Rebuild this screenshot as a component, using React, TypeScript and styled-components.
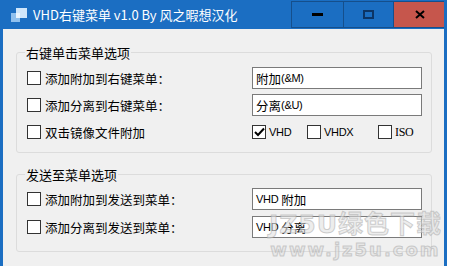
import React from 'react';
import styled, { createGlobalStyle } from 'styled-components';

const GlobalStyle = createGlobalStyle`
  * { box-sizing: border-box; }
  body {
    margin: 0;
    background: #ffffff;
    font-family: "Noto Sans CJK SC", "Liberation Sans", sans-serif;
  }
`;

const Window = styled.div`
  position: relative;
  width: 447px;
  height: 266px;
  display: flex;
  flex-direction: column;
  background: #f0f0f0;
  border-left: 3px solid #1b6ec2;
  border-right: 3px solid #1b6ec2;
  overflow: hidden;
`;

const TitleBar = styled.div`
  height: 29px;
  flex: none;
  display: flex;
  align-items: center;
  background: #1b6ec2;
  padding-left: 7px;
`;

const TitleText = styled.span`
  margin-left: 5px;
  color: #ffffff;
  font-size: 13px;
  line-height: 17px;
  white-space: nowrap;
`;

const Controls = styled.div`
  margin-left: auto;
  margin-right: -2px;
  align-self: flex-start;
  display: flex;
  margin-top: 1px;
`;

const CtrlButton = styled.div<{ $w: number; $close?: boolean }>`
  width: ${p => p.$w}px;
  height: 27px;
  display: flex;
  align-items: center;
  justify-content: center;
  background: ${p => (p.$close ? '#c6564c' : '#1b6ec2')};
  border: 1px solid #154f8c;
  margin-left: -1px;
`;

const Client = styled.div`
  flex: 1;
  padding: 14.5px 12px 0 13px;
`;

const Group = styled.fieldset<{ $pt: number; $pb: number; $mt?: number }>`
  margin: ${p => p.$mt ?? 0}px 0 0 0;
  min-width: 0;
  border: 1px solid #dcdcdc;
  border-radius: 3px;
  padding: ${p => p.$pt}px 9px ${p => p.$pb}px 10px;
`;

const Legend = styled.legend`
  font-size: 13px;
  line-height: 17px;
  padding: 0 1px;
  margin-left: -2px;
  color: #000;
`;

const Rows = styled.div<{ $gap: number }>`
  display: grid;
  grid-template-columns: 1fr 170px;
  grid-auto-rows: 22px;
  row-gap: ${p => p.$gap}px;
`;

const Label = styled.label`
  display: flex;
  align-items: center;
  gap: 4px;
  font-size: 12.5px;
  color: #000;
  white-space: nowrap;
`;

const Box = styled.span`
  width: 14px;
  height: 14px;
  flex: none;
  display: flex;
  align-items: center;
  justify-content: center;
  background: #ffffff;
  border: 1px solid #333333;
`;

const Field = styled.div`
  height: 22px;
  display: flex;
  align-items: center;
  padding-left: 3px;
  background: #ffffff;
  border: 1px solid #7a7a7a;
  font-size: 12.5px;
  color: #000;
  white-space: nowrap;
`;

const Latin = styled.span`
  font-family: "Liberation Sans", sans-serif;
  font-size: 11px;
  letter-spacing: -0.3px;
`;

const Options = styled.div`
  display: flex;
  align-items: center;
`;

const Option = styled.label<{ $w?: number; $serif?: boolean }>`
  width: ${p => (p.$w ? `${p.$w}px` : 'auto')};
  display: flex;
  align-items: center;
  gap: 3px;
  font-family: ${p => (p.$serif ? '"Liberation Serif", serif' : '"Liberation Sans", sans-serif')};
  font-size: ${p => (p.$serif ? '12px' : '11px')};
  letter-spacing: -0.3px;
  color: #000;
`;

const Watermark = styled.div`
  position: absolute;
  right: 2px;
  top: 210px;
  display: flex;
  flex-direction: column;
  align-items: center;
  color: rgba(225, 225, 225, 0.6);
  -webkit-text-stroke: 1px rgba(165, 165, 165, 0.5);
  font-family: "DejaVu Sans", "Noto Sans CJK SC", sans-serif;
  font-weight: 700;
  pointer-events: none;
`;

const MarkBig = styled.span`
  font-size: 25px;
  line-height: 30px;
  letter-spacing: 1px;
`;

const MarkSmall = styled.span`
  font-size: 18px;
  line-height: 20px;
  letter-spacing: 2px;
`;

const Check: React.FC<{ on?: boolean }> = ({ on }) => (
  <Box>
    {on && (
      <svg width="11" height="10" viewBox="0 0 11 10">
        <path d="M1 5 L4 8 L10 1.5" fill="none" stroke="#000" strokeWidth="2" />
      </svg>
    )}
  </Box>
);

const AppIcon = () => (
  <svg width="18" height="16" viewBox="0 0 18 16">
    <rect x="6" y="1" width="11" height="10" fill="#cfe6fb" />
    <rect x="1" y="6" width="9" height="9" fill="#8fc0ee" />
    <rect x="6" y="6" width="4" height="5" fill="#e9f4fe" />
  </svg>
);

const contextRows = [
  { text: '添加附加到右键菜单：', value: <>附加<Latin>(&amp;M)</Latin></> },
  { text: '添加分离到右键菜单：', value: <>分离<Latin>(&amp;U)</Latin></> },
];

const sendRows = [
  { text: '添加附加到发送到菜单：', value: <><Latin>VHD</Latin>&nbsp;附加</> },
  { text: '添加分离到发送到菜单：', value: <><Latin>VHD</Latin>&nbsp;分离</> },
];

export default function App() {
  return (
    <>
      <GlobalStyle />
      <Window>
        <TitleBar>
          <AppIcon />
          <TitleText>VHD右键菜单 v1.0 By 风之暇想汉化</TitleText>
          <Controls>
            <CtrlButton $w={53}>
              <svg width="11" height="4" viewBox="0 0 11 4">
                <rect x="0" y="0" width="11" height="3" fill="#000" />
              </svg>
            </CtrlButton>
            <CtrlButton $w={51}>
              <svg width="11" height="9" viewBox="0 0 11 9">
                <rect x="1" y="1" width="9" height="7" fill="none" stroke="#0c3566" strokeWidth="2" />
              </svg>
            </CtrlButton>
            <CtrlButton $w={53} $close>
              <svg width="10" height="9" viewBox="0 0 10 9">
                <path d="M1 1 L9 8 M9 1 L1 8" stroke="#000" strokeWidth="2" />
              </svg>
            </CtrlButton>
          </Controls>
        </TitleBar>
        <Client>
          <Group $pt={6.5} $pb={9}>
            <Legend>右键单击菜单选项</Legend>
            <Rows $gap={5}>
              {contextRows.map(r => (
                <React.Fragment key={r.text}>
                  <Label><Check />{r.text}</Label>
                  <Field>{r.value}</Field>
                </React.Fragment>
              ))}
              <Label><Check />双击镜像文件附加</Label>
              <Options>
                <Option $w={55}><Check on />VHD</Option>
                <Option $w={71}><Check />VHDX</Option>
                <Option $serif><Check />ISO</Option>
              </Options>
            </Rows>
          </Group>
          <Group $pt={5.5} $pb={13} $mt={12.5}>
            <Legend>发送至菜单选项</Legend>
            <Rows $gap={6}>
              {sendRows.map(r => (
                <React.Fragment key={r.text}>
                  <Label><Check />{r.text}</Label>
                  <Field>{r.value}</Field>
                </React.Fragment>
              ))}
            </Rows>
          </Group>
        </Client>
        <Watermark>
          <MarkBig>JZ5U绿色下载</MarkBig>
          <MarkSmall>www.jz5u.com</MarkSmall>
        </Watermark>
      </Window>
    </>
  );
}
